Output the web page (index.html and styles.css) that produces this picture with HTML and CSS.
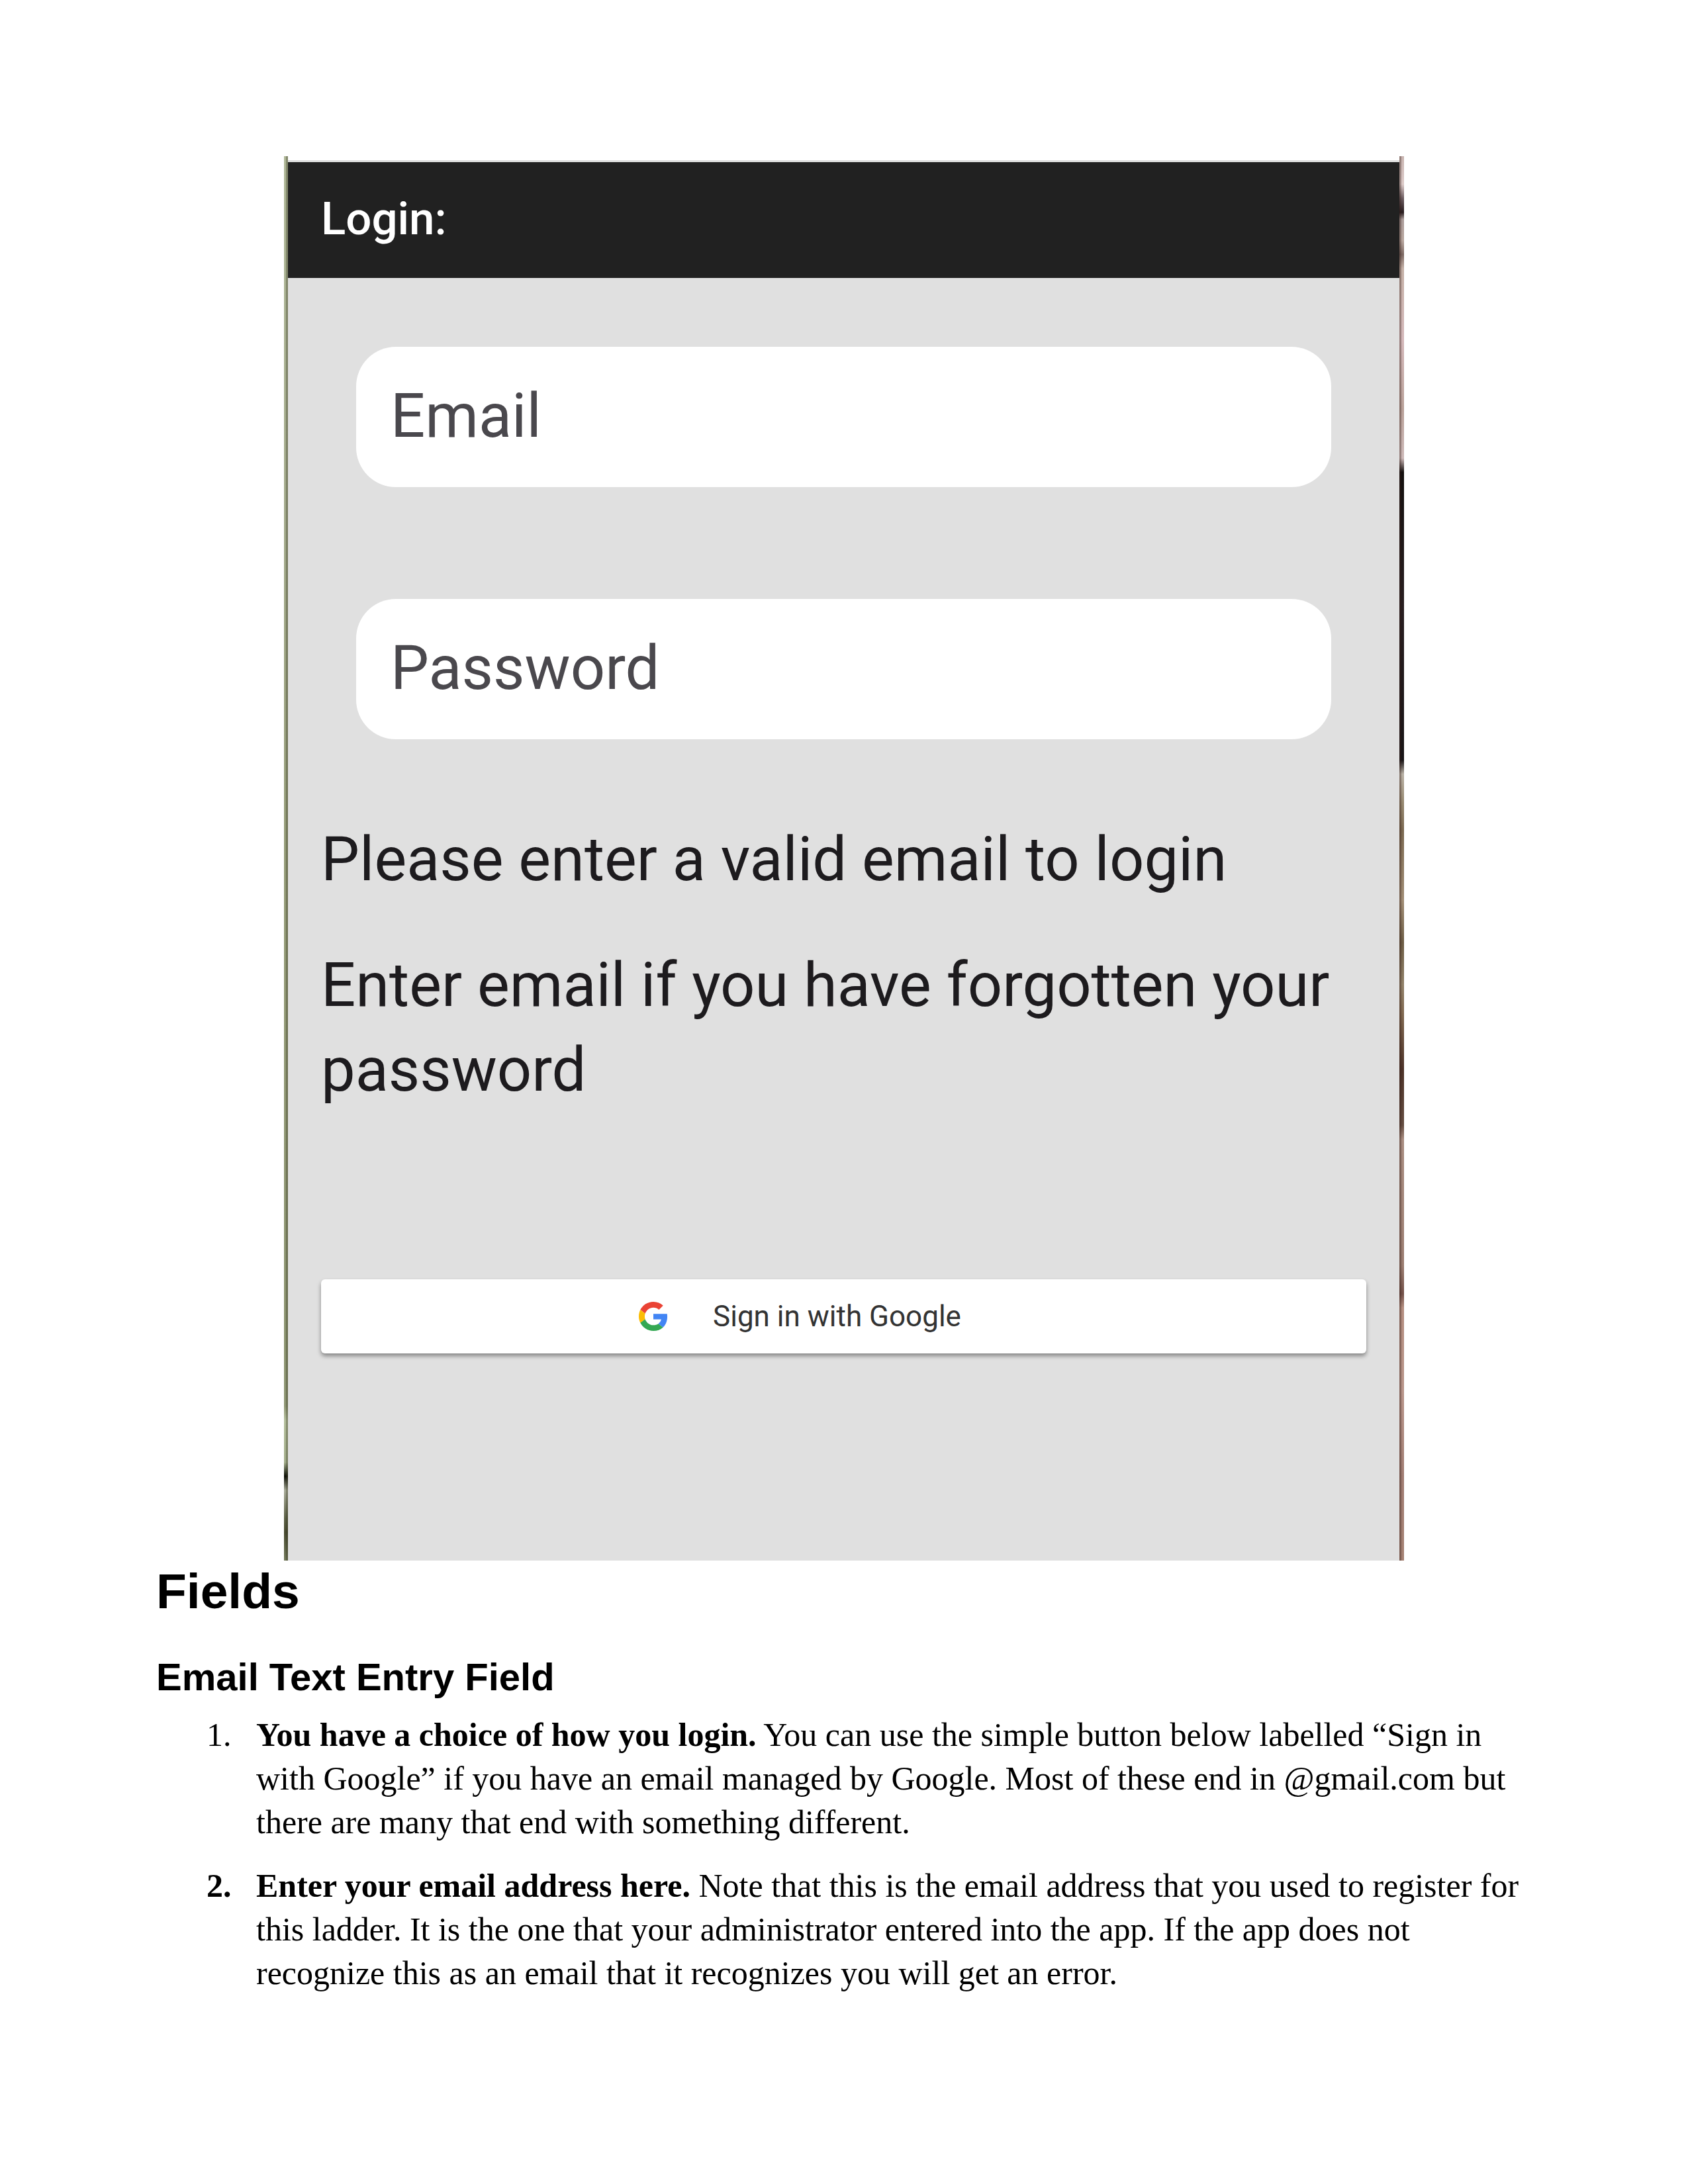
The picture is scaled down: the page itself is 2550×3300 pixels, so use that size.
FILE: index.html
```html
<!DOCTYPE html>
<html lang="en">
<head>
<meta charset="utf-8">
<meta name="viewport" content="width=device-width, initial-scale=1">
<title>Login: Fields</title>
<link rel="stylesheet" href="styles.css">
</head>
<body>
<main class="page">
  <section class="screen" aria-label="Login screen">
    <div class="edge edge-left"></div>
    <form class="panel">
      <header class="bar">Login:</header>
      <div class="content">
        <div class="fields">
          <label class="field" aria-label="Email"><input class="input" type="email" name="email" placeholder="Email"></label>
          <label class="field" aria-label="Password"><input class="input" type="password" name="password" placeholder="Password"></label>
        </div>
        <div class="hints">
          <p class="hint">Please enter a valid email to login</p>
          <p class="hint">Enter email if you have forgotten your password</p>
        </div>
        <button class="google" type="button">
          <svg class="logo" viewBox="0 0 48 48" aria-hidden="true">
            <path fill="#EA4335" d="M24 9.500c3.540 0 6.710 1.220 9.210 3.600l6.850-6.850C35.900 2.380 30.470 0 24 0 14.620 0 6.510 5.380 2.560 13.220l7.980 6.190C12.430 13.720 17.740 9.500 24 9.500z"/>
            <path fill="#4285F4" d="M46.980 24.550c0-1.570-.15-3.090-.38-4.550H24v9.020h12.940c-.58 2.960-2.260 5.480-4.780 7.180l7.730 6c4.510-4.180 7.090-10.360 7.090-17.650z"/>
            <path fill="#FBBC05" d="M10.530 28.590c-.48-1.450-.76-2.990-.76-4.590s.27-3.140.76-4.590l-7.980-6.190C.92 16.460 0 20.120 0 24c0 3.880.92 7.540 2.560 10.780l7.970-6.190z"/>
            <path fill="#34A853" d="M24 48c6.480 0 11.930-2.130 15.890-5.810l-7.730-6c-2.150 1.450-4.920 2.300-8.160 2.300-6.260 0-11.570-4.220-13.470-9.910l-7.980 6.190C6.510 42.620 14.620 48 24 48z"/>
          </svg>
          <span>Sign in with Google</span>
        </button>
      </div>
    </form>
    <div class="edge edge-right"></div>
  </section>

  <h1 class="title">Fields</h1>
  <h2 class="subtitle">Email Text Entry Field</h2>
  <ol class="steps">
    <li class="step"><strong>You have a choice of how you login.</strong> You can use the simple button below labelled “Sign in with Google” if you have an email managed by Google. Most of these end in @gmail.com but there are many that end with something different.</li>
    <li class="step step-strong"><strong>Enter your email address here.</strong> Note that this is the email address that you used to register for this ladder. It is the one that your administrator entered into the app. If the app does not recognize this as an email that it recognizes you will get an error.</li>
  </ol>
</main>
</body>
</html>
```
FILE: styles.css
```css
* {
  box-sizing: border-box;
}

body {
  margin: 0;
  background: #fff;
  color: #000;
  font-family: "Liberation Serif", "Times New Roman", serif;
}

.page {
  padding: 236px;
}

/* App screen */
.screen {
  display: grid;
  grid-template-columns: 6px 1fr 7px;
  max-width: 1692px;
  margin: 0 auto;
  font-family: Roboto, sans-serif;
}

.edge-left {
  background:
    linear-gradient(90deg, transparent 50%, rgba(50, 50, 30, 0.35) 50%),
    linear-gradient(#b0b898 0%, #a4ab8c 25%, #959c78 50%, #8c9470 85%, #8f9774 89%, #b4bf9c 90%, #a3ae8a 93%, #0c0f05 94%, #a8ab98 95%, #5c6045 97%, #484a30 98%, #737a5a 100%);
}

.edge-right {
  background:
    linear-gradient(90deg, rgba(50, 25, 20, 0.35) 45%, transparent 45%),
    linear-gradient(#c8b4b0 0%, #dccac8 2%, #6c5c60 3%, #281c1e 4%, #ab9c9a 4.5%, #b8a69e 6%, #7c6862 7%, #c4b0a6 8%, #d4b8ba 13%, #b8a098 18%, #cdb9b8 21.5%, #14100f 22.5%, #281e20 32%, #181416 43%, #b8b0a4 44%, #968870 46%, #7a6850 48%, #a08c74 53%, #6c5c44 56%, #908068 59%, #806850 61%, #4c3228 65%, #644c40 69%, #a88c80 70%, #9a7c70 79%, #725048 81%, #b48e80 82%, #b8958a 88%, #a07c72 94%, #a58274 100%);
}

.panel {
  padding-top: 6px;
}

.bar {
  padding: 38px 50px 41px;
  border-top: 3px solid #dedfde;
  background: #212121;
  color: #fff;
  font-size: 69px;
  font-weight: 500;
  line-height: 96px;
}

.content {
  padding: 104px 50px 313px;
  background: #e0e0e0;
}

.fields {
  display: grid;
  gap: 169px;
  padding: 0 53px;
}

.field {
  display: block;
}

.input {
  display: block;
  width: 100%;
  height: 212px;
  padding: 0 52px 3px;
  border: 0;
  border-radius: 60px;
  background: #fff;
  color: #49454f;
  font: 92px/128px Roboto, sans-serif;
}

.input::placeholder {
  color: #4a484d;
  opacity: 1;
}

.hints {
  display: grid;
  gap: 62px;
  margin-top: 118px;
}

.hint {
  margin: 0;
  color: #1d1b1e;
  font-size: 92px;
  line-height: 128px;
}

.google {
  display: grid;
  grid-template-columns: 44px auto;
  justify-content: center;
  align-items: center;
  column-gap: 68px;
  width: 100%;
  height: 112px;
  margin-top: 252px;
  padding: 0 132px 0 0;
  border: 0;
  border-radius: 6px;
  background: #fff;
  box-shadow: 0 4px 6px rgba(0, 0, 0, 0.4);
  color: #333;
  font: 44px/64px Roboto, sans-serif;
}

.logo {
  width: 44px;
  height: 44px;
}

/* Guide text */
.title {
  margin: 0;
  font: bold 75px/92px "Liberation Sans", Arial, sans-serif;
}

.subtitle {
  margin: 50px 0 0;
  font: bold 58px/68px "Liberation Sans", Arial, sans-serif;
}

.steps {
  margin: 20px 0 0;
  padding: 0 0 0 126px;
  font-size: 50px;
  line-height: 66px;
}

.step {
  margin-bottom: 30px;
  padding-left: 25px;
}

.step-strong::marker {
  font-weight: bold;
}
```
